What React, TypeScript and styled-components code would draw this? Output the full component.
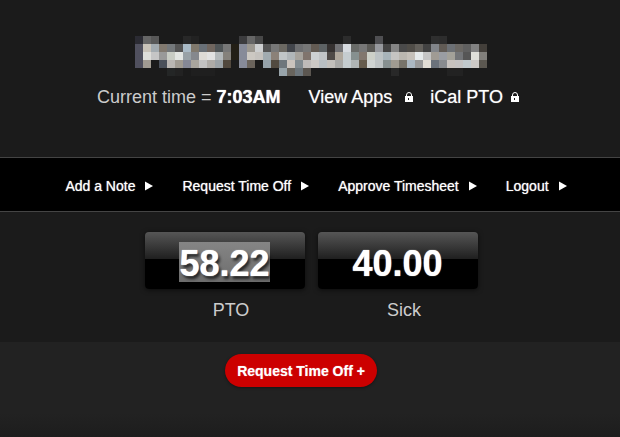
import React from "react";
import styled, { createGlobalStyle } from "styled-components";

const GlobalStyle = createGlobalStyle`
  *, *::before, *::after { box-sizing: border-box; }
  body {
    margin: 0;
    background: #1b1b1b;
    color: #fff;
    font-family: "Liberation Sans", Arial, Helvetica, sans-serif;
  }
`;

const Page = styled.div`
  display: flex;
  flex-direction: column;
  min-height: 100vh;
`;

const Header = styled.header`
  display: flex;
  flex-direction: column;
  align-items: center;
  gap: 10px;
  padding: 36px 0 49px 2px;
`;

const StatusRow = styled.div`
  display: flex;
  align-items: center;
  justify-content: center;
  padding-right: 6px;
  font-size: 18px;
  line-height: 22px;
  white-space: nowrap;
`;

const Clock = styled.span`
  margin-right: 28px;
  color: #ccc;

  strong {
    color: #fff;
    text-shadow: 0 0 1px #fff;
  }
`;

const AppLink = styled.a<{ $gap: number }>`
  display: inline-flex;
  align-items: center;
  gap: ${({ $gap }) => $gap}px;
  color: #fff;
  text-decoration: none;
  text-shadow: 0 0 1px rgba(255, 255, 255, 0.6);

  & + & { margin-left: 17px; }
`;

const NavBar = styled.nav`
  display: flex;
  justify-content: center;
  gap: 29px;
  padding: 19px 0 16px 12px;
  background: #000;
  border-top: 1px solid #444;
  border-bottom: 1px solid #444;
`;

const NavLink = styled.a`
  display: inline-flex;
  align-items: center;
  gap: 10px;
  color: #fff;
  font-size: 14px;
  line-height: 18px;
  white-space: nowrap;
  text-decoration: none;
  text-shadow: 0 0 1px rgba(255, 255, 255, 0.8);
`;

const Balances = styled.section`
  display: flex;
  justify-content: center;
  gap: 13px;
  padding: 20px 0 21px 2px;
`;

const Balance = styled.div`
  display: flex;
  flex-direction: column;
  align-items: center;
  gap: 10px;
  width: 160px;
`;

const Amount = styled.output`
  display: flex;
  align-items: center;
  justify-content: center;
  align-self: stretch;
  height: 57px;
  padding-top: 3px;
  border-radius: 4px;
  background: linear-gradient(#565656 0, #1f1f1f 27px, #000 27px);
  box-shadow: 0 1px 5px rgba(0, 0, 0, 0.6);
  font-size: 36px;
  font-weight: bold;
`;

const Figure = styled.span<{ $selected?: boolean }>`
  height: 40px;
  line-height: 43px;
  background: ${({ $selected }) => ($selected ? "linear-gradient(#858585, #6d6d6d)" : "none")};
  text-shadow: ${({ $selected }) =>
    $selected ? "0 0 1px #fff, 2px 3px 3px rgba(0, 0, 0, 0.7)" : "0 0 1px #fff"};
`;

const BalanceLabel = styled.label`
  padding-left: 13px;
  color: #ccc;
  font-size: 18px;
  line-height: 22px;
`;

const Actions = styled.footer`
  display: flex;
  flex: 1;
  align-items: flex-start;
  justify-content: center;
  padding: 12px 18px 50px 0;
  background: linear-gradient(#222 75%, #1d1d1d);
`;

const RequestButton = styled.button`
  padding: 9px 12px 7px;
  border: 0;
  border-radius: 17px;
  background: #c00;
  box-shadow: 0 1px 3px rgba(0, 0, 0, 0.4);
  color: #fff;
  font: bold 14px/17px "Liberation Sans", Arial, Helvetica, sans-serif;
  text-shadow: 0 0 1px rgba(255, 255, 255, 0.6);
  cursor: pointer;
`;

const MosaicArt = styled.svg`
  display: block;
  width: 352px;
  max-width: 100%;
`;

const mosaicRows: string[] = [
  "2b2b33 666666 585858 - - - 282828 222222 - - - - - 3c3c3e 666666 484848 - - - - - - - - - - 2c2c2c - - - 4f4f52 - - - - - - 2f2f2f 2d2d2d - - - - -",
  "50505e c9c3b9 a3abb0 81796f 74787b 555555 a9bac6 80796d 697077 70665f 505557 777777 231f16 878b99 9c9890 cdcfd0 555555 777777 6b6862 42454b 6d6e70 777777 635b53 5d6264 353130 727275 d7dbe0 696b68 777777 5c5b57 97999e 444444 858585 4a4a4a 504d48 63605b 424242 82858a 615b55 6c7075 6b6864 606060 828282 433f3a",
  "50505e dededa c5c5c5 999999 c8ccc4 e2e5e2 98a1a6 85888d dedbd6 e2e2e2 b4b9bb 85817b 231f16 878b99 ccc8c2 c5c2be a1abb0 8b8178 c0c5c7 b0b6b9 a6a39d 80746d cdd1d3 c2c5c7 4f4a47 b0a89d c5cccf 86908f 82776e cdd0c8 bdc3c5 a8b4ba c5c4c2 bbb7b0 c5c0b9 e6eaeb c5c5c5 a09b94 9a9da3 a3a199 737578 565656 dfdfd9 817f7b",
  "50505e a19b92 - 4a505a bab7b3 a09b92 858896 a9a59d c2c2c2 aeaba7 9ba2a6 51483d - 878b99 6b645c - 96a3aa 514a40 6e767c cac3bd 828b90 bfbbb9 ccc8c4 b8bec2 c2bfbb a8a8a6 c4cccf b0b5b5 665c4d d0d4d2 bfc4c5 879090 a09b91 77736a acb8c2 999999 e2ddd5 6b727b 888b8f c8c3bf c5c3c3 c2cace cdc9c6 5b5750",
  "- - - - 242626 222222 - 1f1f1f 1f1f1f 1f1f1f - - - - - - - - 98a4aa 68645d 6d767c 5b5650 - - - - - - - - - - 282828 - - - - - - 222222 222222 - - -",
];

const NameMosaic = () => (
  <MosaicArt viewBox="0 0 44 5" shapeRendering="crispEdges" role="img" aria-label="Obscured name">
    {mosaicRows.flatMap((row, y) =>
      row.split(" ").map((color, x) =>
        color === "-" ? null : (
          <rect key={`${x}-${y}`} x={x} y={y} width="1" height="1" fill={`#${color}`} />
        ),
      ),
    )}
  </MosaicArt>
);

const LockIcon = () => (
  <svg width="8" height="10" viewBox="0 0 8 10" aria-hidden="true">
    <path d="M1.5 5V3a2.5 2.5 0 0 1 5 0v2" fill="none" stroke="#fff" />
    <path fillRule="evenodd" d="M0 4h8v6H0zM3 6v2h1V6z" fill="#fff" />
  </svg>
);

const ArrowIcon = () => (
  <svg width="8" height="10" viewBox="0 0 8 10" aria-hidden="true">
    <path d="M0 0.5 8 5 0 9.5z" fill="#fff" />
  </svg>
);

const navItems = ["Add a Note", "Request Time Off", "Approve Timesheet", "Logout"];

const balances = [
  { id: "pto", label: "PTO", value: "58.22", selected: true },
  { id: "sick", label: "Sick", value: "40.00", selected: false },
];

export default function App() {
  return (
    <Page>
      <GlobalStyle />
      <Header>
        <NameMosaic />
        <StatusRow>
          <Clock>
            Current time = <strong>7:03AM</strong>
          </Clock>
          <AppLink href="#apps" $gap={13}>
            View Apps
            <LockIcon />
          </AppLink>
          <AppLink href="#ical" $gap={8}>
            iCal PTO
            <LockIcon />
          </AppLink>
        </StatusRow>
      </Header>
      <NavBar>
        {navItems.map((item) => (
          <NavLink key={item} href="#">
            {item}
            <ArrowIcon />
          </NavLink>
        ))}
      </NavBar>
      <Balances>
        {balances.map(({ id, label, value, selected }) => (
          <Balance key={id}>
            <Amount id={id}>
              <Figure $selected={selected}>{value}</Figure>
            </Amount>
            <BalanceLabel htmlFor={id}>{label}</BalanceLabel>
          </Balance>
        ))}
      </Balances>
      <Actions>
        <RequestButton type="button">Request Time Off +</RequestButton>
      </Actions>
    </Page>
  );
}
